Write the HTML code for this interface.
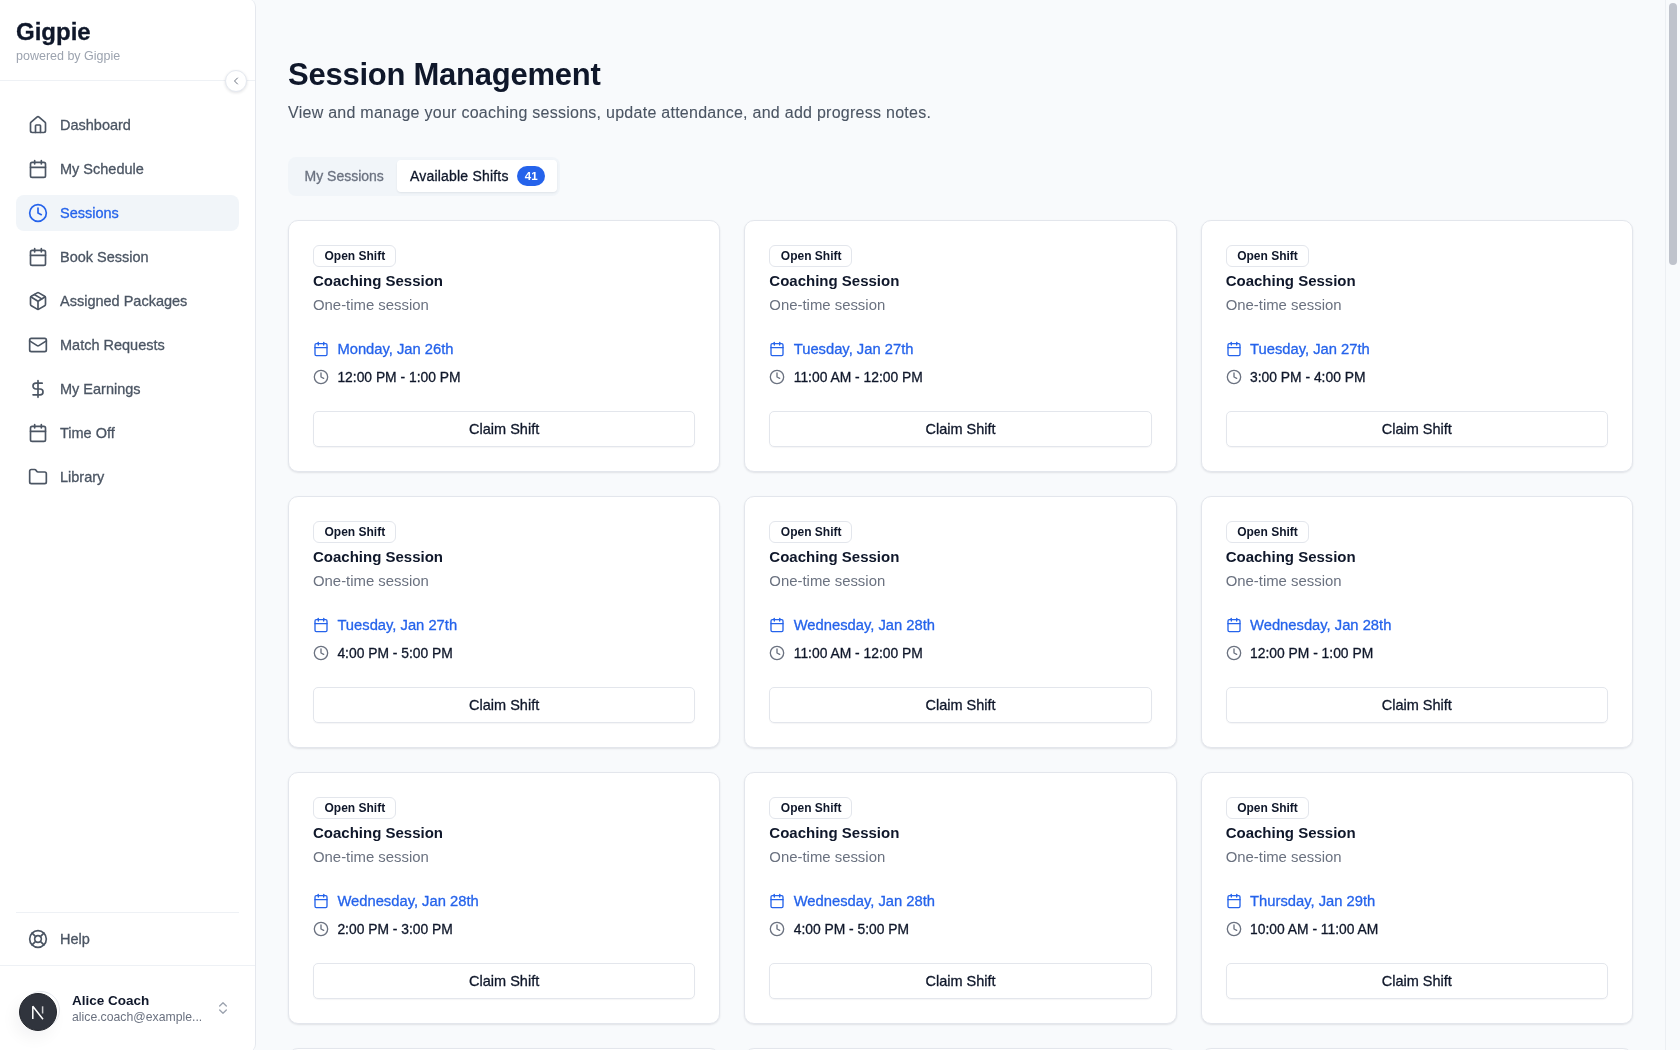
<!DOCTYPE html>
<html><head><meta charset="utf-8"><title>Session Management</title>
<style>
*{box-sizing:border-box;margin:0;padding:0}
html,body{width:1680px;height:1050px;overflow:hidden;background:#f8fafc;font-family:"Liberation Sans", sans-serif}
#root{position:absolute;left:0;top:0;width:1680px;height:1050px;will-change:transform}
.t{position:absolute;white-space:nowrap}
.m{-webkit-text-stroke:0.3px currentColor}
.ic{position:absolute;display:block}
.b{font-weight:bold}
#sb{position:absolute;left:0;top:-1.5px;width:256px;height:1053px;background:#fff;border-right:1px solid #e5e8ee;border-radius:0 8px 8px 0}
.hl{position:absolute;height:1px;background:#eef1f5}
.act{position:absolute;left:16px;top:195px;width:223px;height:36px;background:#f1f5f9;border-radius:8px}
.collapse{position:absolute;left:225px;top:70px;width:22px;height:22px;border-radius:50%;background:#fff;border:1px solid #e5e9f0;box-shadow:0 1px 3px rgba(15,23,42,.12)}
.avatar{position:absolute;left:19px;top:993px;width:38px;height:38px;border-radius:50%;box-shadow:-4px 7px 16px rgba(15,23,42,.05)}
.ring{position:absolute;left:21.5px;top:990.5px;width:38px;height:38px;border-radius:50%;border:1px solid #e6e9ef}
.card{position:absolute;width:432.333px;height:252px;background:#fff;border:1px solid #e3e6ec;border-radius:10px;box-shadow:0 1px 2px rgba(16,24,40,.10)}
.badge{position:absolute;left:24px;top:24px;width:83px;height:22px;border:1px solid #e3e6ec;border-radius:6px}
.btn{position:absolute;left:24px;top:190px;width:382.333px;height:36px;border:1px solid #e3e6ec;border-radius:5px;box-shadow:0 1px 1px rgba(15,23,42,.04)}
#tabs{position:absolute;left:288px;top:157px;width:272px;height:39px;background:#f1f5f9;border-radius:8px}
#tab2{position:absolute;left:397px;top:160px;width:160px;height:32px;background:#fff;border-radius:4px;box-shadow:0 1px 2px rgba(15,23,42,.08)}
.pill{position:absolute;left:517px;top:166px;width:28px;height:20px;background:#2563eb;border-radius:10px}
#track{position:absolute;left:1665px;top:0;width:15px;height:1050px;background:#f8fafc;border-left:1px solid #eceff3}
#thumb{position:absolute;left:1669px;top:3px;width:8px;height:262px;background:#bfc3cc;border-radius:4px}
</style></head>
<body><div id="root">
<div id="sb"></div>
<div class="t b" style="left:16px;top:16.68px;font-size:24px;line-height:30px;color:#0f172a;-webkit-text-stroke:0.3px currentColor">Gigpie</div>
<div class="t " style="left:16px;top:47.67px;font-size:12.5px;line-height:16px;color:#9ca3af">powered by Gigpie</div>
<div class="hl" style="left:0;top:80px;width:255px"></div>
<div class="collapse"></div>
<svg class="ic" style="left:230.0px;top:75.0px;" width="12" height="12" viewBox="0 0 24 24" fill="none" stroke="#6b7280" stroke-width="2" stroke-linecap="round" stroke-linejoin="round"><path d="m15 18-6-6 6-6"/></svg>
<div class="act"></div>
<svg class="ic" style="left:28.0px;top:115.0px;" width="20" height="20" viewBox="0 0 24 24" fill="none" stroke="#4b5563" stroke-width="2" stroke-linecap="round" stroke-linejoin="round"><path d="M15 21v-8a1 1 0 0 0-1-1h-4a1 1 0 0 0-1 1v8"/><path d="M3 10a2 2 0 0 1 .709-1.528l7-5.999a2 2 0 0 1 2.582 0l7 5.999A2 2 0 0 1 21 10v9a2 2 0 0 1-2 2H5a2 2 0 0 1-2-2z"/></svg>
<div class="t m" style="left:60px;top:115.98px;font-size:14.5px;line-height:18px;color:#4b5563">Dashboard</div>
<svg class="ic" style="left:28.0px;top:159.0px;" width="20" height="20" viewBox="0 0 24 24" fill="none" stroke="#4b5563" stroke-width="2" stroke-linecap="round" stroke-linejoin="round"><rect width="18" height="18" x="3" y="4" rx="2"/><path d="M16 2v4"/><path d="M8 2v4"/><path d="M3 10h18"/></svg>
<div class="t m" style="left:60px;top:159.98px;font-size:14.5px;line-height:18px;color:#4b5563">My Schedule</div>
<svg class="ic" style="left:28.0px;top:203.0px;" width="20" height="20" viewBox="0 0 24 24" fill="none" stroke="#2563eb" stroke-width="2" stroke-linecap="round" stroke-linejoin="round"><circle cx="12" cy="12" r="10"/><path d="M12 6v6l4 2"/></svg>
<div class="t m" style="left:60px;top:203.98px;font-size:14.5px;line-height:18px;color:#2563eb">Sessions</div>
<svg class="ic" style="left:28.0px;top:247.0px;" width="20" height="20" viewBox="0 0 24 24" fill="none" stroke="#4b5563" stroke-width="2" stroke-linecap="round" stroke-linejoin="round"><rect width="18" height="18" x="3" y="4" rx="2"/><path d="M16 2v4"/><path d="M8 2v4"/><path d="M3 10h18"/></svg>
<div class="t m" style="left:60px;top:247.98px;font-size:14.5px;line-height:18px;color:#4b5563">Book Session</div>
<svg class="ic" style="left:28.0px;top:291.0px;" width="20" height="20" viewBox="0 0 24 24" fill="none" stroke="#4b5563" stroke-width="2" stroke-linecap="round" stroke-linejoin="round"><path d="M11 21.73a2 2 0 0 0 2 0l7-4A2 2 0 0 0 21 16V8a2 2 0 0 0-1-1.73l-7-4a2 2 0 0 0-2 0l-7 4A2 2 0 0 0 3 8v8a2 2 0 0 0 1 1.73z"/><path d="M12 22V12"/><path d="m3.3 7 7.703 4.734a2 2 0 0 0 1.994 0L20.7 7"/><path d="m7.5 4.27 9 5.15"/></svg>
<div class="t m" style="left:60px;top:291.98px;font-size:14.5px;line-height:18px;color:#4b5563">Assigned Packages</div>
<svg class="ic" style="left:28.0px;top:335.0px;" width="20" height="20" viewBox="0 0 24 24" fill="none" stroke="#4b5563" stroke-width="2" stroke-linecap="round" stroke-linejoin="round"><rect width="20" height="16" x="2" y="4" rx="2"/><path d="m22 7-8.97 5.7a1.94 1.94 0 0 1-2.06 0L2 7"/></svg>
<div class="t m" style="left:60px;top:335.98px;font-size:14.5px;line-height:18px;color:#4b5563">Match Requests</div>
<svg class="ic" style="left:28.0px;top:379.0px;" width="20" height="20" viewBox="0 0 24 24" fill="none" stroke="#4b5563" stroke-width="2" stroke-linecap="round" stroke-linejoin="round"><path d="M12 2v20"/><path d="M17 5H9.5a3.5 3.5 0 0 0 0 7h5a3.5 3.5 0 0 1 0 7H6"/></svg>
<div class="t m" style="left:60px;top:379.98px;font-size:14.5px;line-height:18px;color:#4b5563">My Earnings</div>
<svg class="ic" style="left:28.0px;top:423.0px;" width="20" height="20" viewBox="0 0 24 24" fill="none" stroke="#4b5563" stroke-width="2" stroke-linecap="round" stroke-linejoin="round"><rect width="18" height="18" x="3" y="4" rx="2"/><path d="M16 2v4"/><path d="M8 2v4"/><path d="M3 10h18"/></svg>
<div class="t m" style="left:60px;top:423.98px;font-size:14.5px;line-height:18px;color:#4b5563">Time Off</div>
<svg class="ic" style="left:28.0px;top:467.0px;" width="20" height="20" viewBox="0 0 24 24" fill="none" stroke="#4b5563" stroke-width="2" stroke-linecap="round" stroke-linejoin="round"><path d="M20 20a2 2 0 0 0 2-2V8a2 2 0 0 0-2-2h-7.9a2 2 0 0 1-1.69-.9L9.6 3.9A2 2 0 0 0 7.93 3H4a2 2 0 0 0-2 2v13a2 2 0 0 0 2 2Z"/></svg>
<div class="t m" style="left:60px;top:467.98px;font-size:14.5px;line-height:18px;color:#4b5563">Library</div>
<div class="hl" style="left:16px;top:912px;width:223px"></div>
<svg class="ic" style="left:28.0px;top:929.0px;" width="20" height="20" viewBox="0 0 24 24" fill="none" stroke="#4b5563" stroke-width="2" stroke-linecap="round" stroke-linejoin="round"><circle cx="12" cy="12" r="10"/><path d="m4.93 4.93 4.24 4.24"/><path d="m14.83 9.17 4.24-4.24"/><path d="m14.83 14.83 4.24 4.24"/><path d="m9.17 14.83-4.24 4.24"/><circle cx="12" cy="12" r="4"/></svg>
<div class="t m" style="left:60px;top:929.98px;font-size:14.5px;line-height:18px;color:#4b5563">Help</div>
<div class="hl" style="left:0;top:965px;width:255px"></div>
<div class="avatar"></div>
<div class="ring"></div>
<svg class="ic" style="left:19px;top:993px" width="38" height="38" viewBox="0 0 38 38"><circle cx="19" cy="19" r="18.5" fill="#30343d" stroke="#24272e" stroke-width="1"/><path d="M13.8 26V13.3L24 26.3" fill="none" stroke="#fff" stroke-width="1.5" stroke-linejoin="bevel"/><path d="M23.6 13.3v7.2" stroke="#fff" stroke-opacity=".75" stroke-width="1.5"/></svg>
<div class="t b" style="left:72px;top:991.82px;font-size:13.5px;line-height:17px;color:#0f172a">Alice Coach</div>
<div class="t " style="left:72px;top:1010.26px;font-size:12.25px;line-height:15px;color:#6b7280">alice.coach@example...</div>
<svg class="ic" style="left:215.0px;top:1000.0px;" width="16" height="16" viewBox="0 0 24 24" fill="none" stroke="#9ca3af" stroke-width="2" stroke-linecap="round" stroke-linejoin="round"><path d="m7 15 5 5 5-5"/><path d="m7 9 5-5 5 5"/></svg>
<div class="t b" style="left:288px;top:54.56px;font-size:31px;line-height:39px;color:#0f172a;letter-spacing:-0.25px">Session Management</div>
<div class="t " style="left:288px;top:102.76px;font-size:16px;line-height:20px;color:#4b5563;letter-spacing:0.265px;-webkit-text-stroke:0.1px currentColor">View and manage your coaching sessions, update attendance, and add progress notes.</div>
<div id="tabs"></div><div id="tab2"></div><div class="pill"></div>
<div class="t m" style="left:304.5px;top:167.15px;font-size:14px;line-height:18px;color:#6b7280">My Sessions</div>
<div class="t m" style="left:410px;top:167.15px;font-size:14px;line-height:18px;color:#0f172a;letter-spacing:0.2px">Available Shifts</div>
<div class="t b" style="left:517px;top:169.32px;font-size:11.5px;line-height:14px;color:#fff;width:28px;text-align:center;padding-left:0.5px">41</div>
<div class="card" style="left:288.0px;top:220px"><div class="badge"></div><div class="btn"></div></div>
<div class="t b" style="left:324.5px;top:248.54px;font-size:12px;line-height:15px;color:#0f172a">Open Shift</div>
<div class="t b" style="left:313.0px;top:271.30px;font-size:15px;line-height:19px;color:#0f172a">Coaching Session</div>
<div class="t " style="left:313.0px;top:295.94px;font-size:14.9px;line-height:19px;color:#6b7280">One-time session</div>
<svg class="ic" style="left:313.0px;top:341.0px;" width="16" height="16" viewBox="0 0 24 24" fill="none" stroke="#2563eb" stroke-width="2" stroke-linecap="round" stroke-linejoin="round"><rect width="18" height="18" x="3" y="4" rx="2"/><path d="M16 2v4"/><path d="M8 2v4"/><path d="M3 10h18"/></svg>
<div class="t m" style="left:337.4px;top:339.69px;font-size:14.75px;line-height:18px;color:#2563eb">Monday, Jan 26th</div>
<svg class="ic" style="left:313.0px;top:369.0px;" width="16" height="16" viewBox="0 0 24 24" fill="none" stroke="#6b7280" stroke-width="2" stroke-linecap="round" stroke-linejoin="round"><circle cx="12" cy="12" r="10"/><path d="M12 6v6l4 2"/></svg>
<div class="t m" style="left:337.4px;top:368.70px;font-size:13.85px;line-height:17px;color:#0f172a">12:00 PM - 1:00 PM</div>
<div class="t m" style="left:288.0px;width:432.333px;text-align:center;top:419.98px;font-size:14.5px;line-height:18px;color:#0f172a">Claim Shift</div>
<div class="card" style="left:744.3333333333333px;top:220px"><div class="badge"></div><div class="btn"></div></div>
<div class="t b" style="left:780.8333333333333px;top:248.54px;font-size:12px;line-height:15px;color:#0f172a">Open Shift</div>
<div class="t b" style="left:769.3333333333333px;top:271.30px;font-size:15px;line-height:19px;color:#0f172a">Coaching Session</div>
<div class="t " style="left:769.3333333333333px;top:295.94px;font-size:14.9px;line-height:19px;color:#6b7280">One-time session</div>
<svg class="ic" style="left:769.3333333333333px;top:341.0px;" width="16" height="16" viewBox="0 0 24 24" fill="none" stroke="#2563eb" stroke-width="2" stroke-linecap="round" stroke-linejoin="round"><rect width="18" height="18" x="3" y="4" rx="2"/><path d="M16 2v4"/><path d="M8 2v4"/><path d="M3 10h18"/></svg>
<div class="t m" style="left:793.7333333333332px;top:339.69px;font-size:14.75px;line-height:18px;color:#2563eb">Tuesday, Jan 27th</div>
<svg class="ic" style="left:769.3333333333333px;top:369.0px;" width="16" height="16" viewBox="0 0 24 24" fill="none" stroke="#6b7280" stroke-width="2" stroke-linecap="round" stroke-linejoin="round"><circle cx="12" cy="12" r="10"/><path d="M12 6v6l4 2"/></svg>
<div class="t m" style="left:793.7333333333332px;top:368.70px;font-size:13.85px;line-height:17px;color:#0f172a">11:00 AM - 12:00 PM</div>
<div class="t m" style="left:744.3333333333333px;width:432.333px;text-align:center;top:419.98px;font-size:14.5px;line-height:18px;color:#0f172a">Claim Shift</div>
<div class="card" style="left:1200.6666666666665px;top:220px"><div class="badge"></div><div class="btn"></div></div>
<div class="t b" style="left:1237.1666666666665px;top:248.54px;font-size:12px;line-height:15px;color:#0f172a">Open Shift</div>
<div class="t b" style="left:1225.6666666666665px;top:271.30px;font-size:15px;line-height:19px;color:#0f172a">Coaching Session</div>
<div class="t " style="left:1225.6666666666665px;top:295.94px;font-size:14.9px;line-height:19px;color:#6b7280">One-time session</div>
<svg class="ic" style="left:1225.6666666666665px;top:341.0px;" width="16" height="16" viewBox="0 0 24 24" fill="none" stroke="#2563eb" stroke-width="2" stroke-linecap="round" stroke-linejoin="round"><rect width="18" height="18" x="3" y="4" rx="2"/><path d="M16 2v4"/><path d="M8 2v4"/><path d="M3 10h18"/></svg>
<div class="t m" style="left:1250.0666666666666px;top:339.69px;font-size:14.75px;line-height:18px;color:#2563eb">Tuesday, Jan 27th</div>
<svg class="ic" style="left:1225.6666666666665px;top:369.0px;" width="16" height="16" viewBox="0 0 24 24" fill="none" stroke="#6b7280" stroke-width="2" stroke-linecap="round" stroke-linejoin="round"><circle cx="12" cy="12" r="10"/><path d="M12 6v6l4 2"/></svg>
<div class="t m" style="left:1250.0666666666666px;top:368.70px;font-size:13.85px;line-height:17px;color:#0f172a">3:00 PM - 4:00 PM</div>
<div class="t m" style="left:1200.6666666666665px;width:432.333px;text-align:center;top:419.98px;font-size:14.5px;line-height:18px;color:#0f172a">Claim Shift</div>
<div class="card" style="left:288.0px;top:496px"><div class="badge"></div><div class="btn"></div></div>
<div class="t b" style="left:324.5px;top:524.54px;font-size:12px;line-height:15px;color:#0f172a">Open Shift</div>
<div class="t b" style="left:313.0px;top:547.30px;font-size:15px;line-height:19px;color:#0f172a">Coaching Session</div>
<div class="t " style="left:313.0px;top:571.94px;font-size:14.9px;line-height:19px;color:#6b7280">One-time session</div>
<svg class="ic" style="left:313.0px;top:617.0px;" width="16" height="16" viewBox="0 0 24 24" fill="none" stroke="#2563eb" stroke-width="2" stroke-linecap="round" stroke-linejoin="round"><rect width="18" height="18" x="3" y="4" rx="2"/><path d="M16 2v4"/><path d="M8 2v4"/><path d="M3 10h18"/></svg>
<div class="t m" style="left:337.4px;top:615.69px;font-size:14.75px;line-height:18px;color:#2563eb">Tuesday, Jan 27th</div>
<svg class="ic" style="left:313.0px;top:645.0px;" width="16" height="16" viewBox="0 0 24 24" fill="none" stroke="#6b7280" stroke-width="2" stroke-linecap="round" stroke-linejoin="round"><circle cx="12" cy="12" r="10"/><path d="M12 6v6l4 2"/></svg>
<div class="t m" style="left:337.4px;top:644.70px;font-size:13.85px;line-height:17px;color:#0f172a">4:00 PM - 5:00 PM</div>
<div class="t m" style="left:288.0px;width:432.333px;text-align:center;top:695.98px;font-size:14.5px;line-height:18px;color:#0f172a">Claim Shift</div>
<div class="card" style="left:744.3333333333333px;top:496px"><div class="badge"></div><div class="btn"></div></div>
<div class="t b" style="left:780.8333333333333px;top:524.54px;font-size:12px;line-height:15px;color:#0f172a">Open Shift</div>
<div class="t b" style="left:769.3333333333333px;top:547.30px;font-size:15px;line-height:19px;color:#0f172a">Coaching Session</div>
<div class="t " style="left:769.3333333333333px;top:571.94px;font-size:14.9px;line-height:19px;color:#6b7280">One-time session</div>
<svg class="ic" style="left:769.3333333333333px;top:617.0px;" width="16" height="16" viewBox="0 0 24 24" fill="none" stroke="#2563eb" stroke-width="2" stroke-linecap="round" stroke-linejoin="round"><rect width="18" height="18" x="3" y="4" rx="2"/><path d="M16 2v4"/><path d="M8 2v4"/><path d="M3 10h18"/></svg>
<div class="t m" style="left:793.7333333333332px;top:615.69px;font-size:14.75px;line-height:18px;color:#2563eb">Wednesday, Jan 28th</div>
<svg class="ic" style="left:769.3333333333333px;top:645.0px;" width="16" height="16" viewBox="0 0 24 24" fill="none" stroke="#6b7280" stroke-width="2" stroke-linecap="round" stroke-linejoin="round"><circle cx="12" cy="12" r="10"/><path d="M12 6v6l4 2"/></svg>
<div class="t m" style="left:793.7333333333332px;top:644.70px;font-size:13.85px;line-height:17px;color:#0f172a">11:00 AM - 12:00 PM</div>
<div class="t m" style="left:744.3333333333333px;width:432.333px;text-align:center;top:695.98px;font-size:14.5px;line-height:18px;color:#0f172a">Claim Shift</div>
<div class="card" style="left:1200.6666666666665px;top:496px"><div class="badge"></div><div class="btn"></div></div>
<div class="t b" style="left:1237.1666666666665px;top:524.54px;font-size:12px;line-height:15px;color:#0f172a">Open Shift</div>
<div class="t b" style="left:1225.6666666666665px;top:547.30px;font-size:15px;line-height:19px;color:#0f172a">Coaching Session</div>
<div class="t " style="left:1225.6666666666665px;top:571.94px;font-size:14.9px;line-height:19px;color:#6b7280">One-time session</div>
<svg class="ic" style="left:1225.6666666666665px;top:617.0px;" width="16" height="16" viewBox="0 0 24 24" fill="none" stroke="#2563eb" stroke-width="2" stroke-linecap="round" stroke-linejoin="round"><rect width="18" height="18" x="3" y="4" rx="2"/><path d="M16 2v4"/><path d="M8 2v4"/><path d="M3 10h18"/></svg>
<div class="t m" style="left:1250.0666666666666px;top:615.69px;font-size:14.75px;line-height:18px;color:#2563eb">Wednesday, Jan 28th</div>
<svg class="ic" style="left:1225.6666666666665px;top:645.0px;" width="16" height="16" viewBox="0 0 24 24" fill="none" stroke="#6b7280" stroke-width="2" stroke-linecap="round" stroke-linejoin="round"><circle cx="12" cy="12" r="10"/><path d="M12 6v6l4 2"/></svg>
<div class="t m" style="left:1250.0666666666666px;top:644.70px;font-size:13.85px;line-height:17px;color:#0f172a">12:00 PM - 1:00 PM</div>
<div class="t m" style="left:1200.6666666666665px;width:432.333px;text-align:center;top:695.98px;font-size:14.5px;line-height:18px;color:#0f172a">Claim Shift</div>
<div class="card" style="left:288.0px;top:772px"><div class="badge"></div><div class="btn"></div></div>
<div class="t b" style="left:324.5px;top:800.54px;font-size:12px;line-height:15px;color:#0f172a">Open Shift</div>
<div class="t b" style="left:313.0px;top:823.30px;font-size:15px;line-height:19px;color:#0f172a">Coaching Session</div>
<div class="t " style="left:313.0px;top:847.94px;font-size:14.9px;line-height:19px;color:#6b7280">One-time session</div>
<svg class="ic" style="left:313.0px;top:893.0px;" width="16" height="16" viewBox="0 0 24 24" fill="none" stroke="#2563eb" stroke-width="2" stroke-linecap="round" stroke-linejoin="round"><rect width="18" height="18" x="3" y="4" rx="2"/><path d="M16 2v4"/><path d="M8 2v4"/><path d="M3 10h18"/></svg>
<div class="t m" style="left:337.4px;top:891.69px;font-size:14.75px;line-height:18px;color:#2563eb">Wednesday, Jan 28th</div>
<svg class="ic" style="left:313.0px;top:921.0px;" width="16" height="16" viewBox="0 0 24 24" fill="none" stroke="#6b7280" stroke-width="2" stroke-linecap="round" stroke-linejoin="round"><circle cx="12" cy="12" r="10"/><path d="M12 6v6l4 2"/></svg>
<div class="t m" style="left:337.4px;top:920.70px;font-size:13.85px;line-height:17px;color:#0f172a">2:00 PM - 3:00 PM</div>
<div class="t m" style="left:288.0px;width:432.333px;text-align:center;top:971.98px;font-size:14.5px;line-height:18px;color:#0f172a">Claim Shift</div>
<div class="card" style="left:744.3333333333333px;top:772px"><div class="badge"></div><div class="btn"></div></div>
<div class="t b" style="left:780.8333333333333px;top:800.54px;font-size:12px;line-height:15px;color:#0f172a">Open Shift</div>
<div class="t b" style="left:769.3333333333333px;top:823.30px;font-size:15px;line-height:19px;color:#0f172a">Coaching Session</div>
<div class="t " style="left:769.3333333333333px;top:847.94px;font-size:14.9px;line-height:19px;color:#6b7280">One-time session</div>
<svg class="ic" style="left:769.3333333333333px;top:893.0px;" width="16" height="16" viewBox="0 0 24 24" fill="none" stroke="#2563eb" stroke-width="2" stroke-linecap="round" stroke-linejoin="round"><rect width="18" height="18" x="3" y="4" rx="2"/><path d="M16 2v4"/><path d="M8 2v4"/><path d="M3 10h18"/></svg>
<div class="t m" style="left:793.7333333333332px;top:891.69px;font-size:14.75px;line-height:18px;color:#2563eb">Wednesday, Jan 28th</div>
<svg class="ic" style="left:769.3333333333333px;top:921.0px;" width="16" height="16" viewBox="0 0 24 24" fill="none" stroke="#6b7280" stroke-width="2" stroke-linecap="round" stroke-linejoin="round"><circle cx="12" cy="12" r="10"/><path d="M12 6v6l4 2"/></svg>
<div class="t m" style="left:793.7333333333332px;top:920.70px;font-size:13.85px;line-height:17px;color:#0f172a">4:00 PM - 5:00 PM</div>
<div class="t m" style="left:744.3333333333333px;width:432.333px;text-align:center;top:971.98px;font-size:14.5px;line-height:18px;color:#0f172a">Claim Shift</div>
<div class="card" style="left:1200.6666666666665px;top:772px"><div class="badge"></div><div class="btn"></div></div>
<div class="t b" style="left:1237.1666666666665px;top:800.54px;font-size:12px;line-height:15px;color:#0f172a">Open Shift</div>
<div class="t b" style="left:1225.6666666666665px;top:823.30px;font-size:15px;line-height:19px;color:#0f172a">Coaching Session</div>
<div class="t " style="left:1225.6666666666665px;top:847.94px;font-size:14.9px;line-height:19px;color:#6b7280">One-time session</div>
<svg class="ic" style="left:1225.6666666666665px;top:893.0px;" width="16" height="16" viewBox="0 0 24 24" fill="none" stroke="#2563eb" stroke-width="2" stroke-linecap="round" stroke-linejoin="round"><rect width="18" height="18" x="3" y="4" rx="2"/><path d="M16 2v4"/><path d="M8 2v4"/><path d="M3 10h18"/></svg>
<div class="t m" style="left:1250.0666666666666px;top:891.69px;font-size:14.75px;line-height:18px;color:#2563eb">Thursday, Jan 29th</div>
<svg class="ic" style="left:1225.6666666666665px;top:921.0px;" width="16" height="16" viewBox="0 0 24 24" fill="none" stroke="#6b7280" stroke-width="2" stroke-linecap="round" stroke-linejoin="round"><circle cx="12" cy="12" r="10"/><path d="M12 6v6l4 2"/></svg>
<div class="t m" style="left:1250.0666666666666px;top:920.70px;font-size:13.85px;line-height:17px;color:#0f172a">10:00 AM - 11:00 AM</div>
<div class="t m" style="left:1200.6666666666665px;width:432.333px;text-align:center;top:971.98px;font-size:14.5px;line-height:18px;color:#0f172a">Claim Shift</div>
<div class="card" style="left:288.0px;top:1048px"><div class="badge"></div><div class="btn"></div></div>
<div class="t b" style="left:324.5px;top:1076.54px;font-size:12px;line-height:15px;color:#0f172a">Open Shift</div>
<div class="t b" style="left:313.0px;top:1099.30px;font-size:15px;line-height:19px;color:#0f172a">Coaching Session</div>
<div class="t " style="left:313.0px;top:1123.94px;font-size:14.9px;line-height:19px;color:#6b7280">One-time session</div>
<div class="t m" style="left:288.0px;width:432.333px;text-align:center;top:1247.98px;font-size:14.5px;line-height:18px;color:#0f172a">Claim Shift</div>
<div class="card" style="left:744.3333333333333px;top:1048px"><div class="badge"></div><div class="btn"></div></div>
<div class="t b" style="left:780.8333333333333px;top:1076.54px;font-size:12px;line-height:15px;color:#0f172a">Open Shift</div>
<div class="t b" style="left:769.3333333333333px;top:1099.30px;font-size:15px;line-height:19px;color:#0f172a">Coaching Session</div>
<div class="t " style="left:769.3333333333333px;top:1123.94px;font-size:14.9px;line-height:19px;color:#6b7280">One-time session</div>
<div class="t m" style="left:744.3333333333333px;width:432.333px;text-align:center;top:1247.98px;font-size:14.5px;line-height:18px;color:#0f172a">Claim Shift</div>
<div class="card" style="left:1200.6666666666665px;top:1048px"><div class="badge"></div><div class="btn"></div></div>
<div class="t b" style="left:1237.1666666666665px;top:1076.54px;font-size:12px;line-height:15px;color:#0f172a">Open Shift</div>
<div class="t b" style="left:1225.6666666666665px;top:1099.30px;font-size:15px;line-height:19px;color:#0f172a">Coaching Session</div>
<div class="t " style="left:1225.6666666666665px;top:1123.94px;font-size:14.9px;line-height:19px;color:#6b7280">One-time session</div>
<div class="t m" style="left:1200.6666666666665px;width:432.333px;text-align:center;top:1247.98px;font-size:14.5px;line-height:18px;color:#0f172a">Claim Shift</div>
<div id="track"></div><div id="thumb"></div>
</div></body></html>
